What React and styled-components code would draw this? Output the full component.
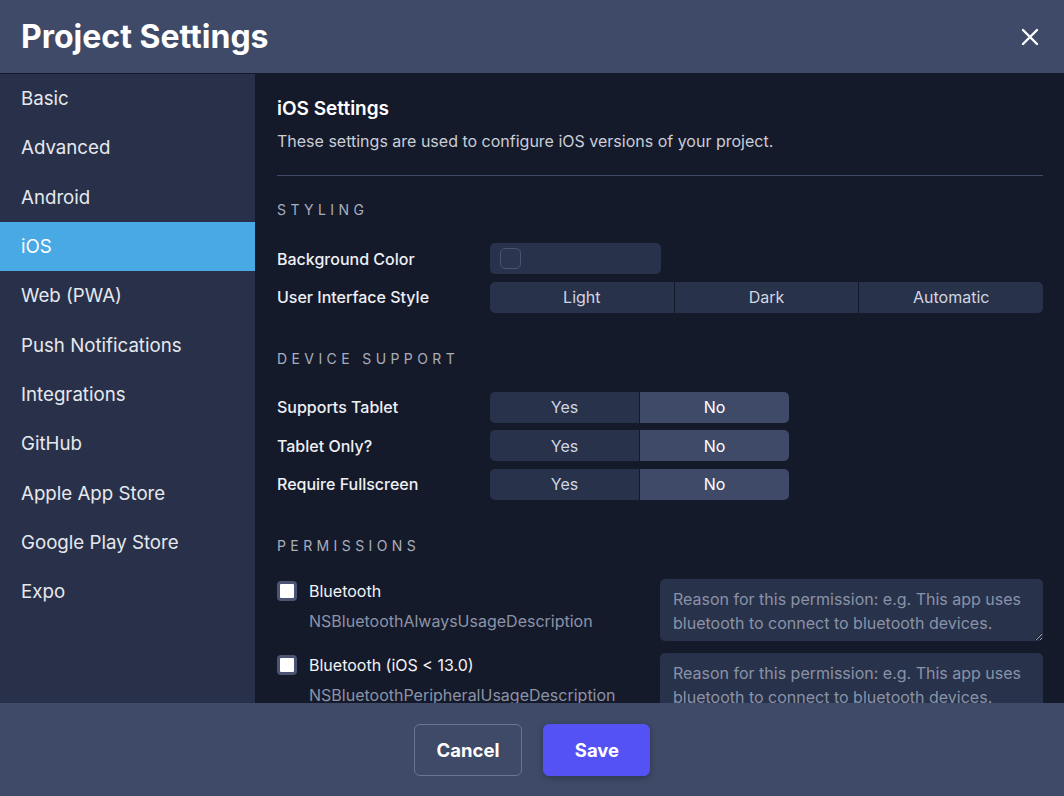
import React, { useState } from 'react';
import styled, { createGlobalStyle } from 'styled-components';

const GlobalStyle = createGlobalStyle`
  html, body {
    margin: 0;
    padding: 0;
    height: 100%;
    background: #151a2b;
  }
  #root {
    height: 100%;
  }
  * {
    box-sizing: border-box;
  }
`;

const Modal = styled.div`
  height: 100vh;
  display: flex;
  flex-direction: column;
  font-family: Inter, "Noto Sans", sans-serif;
  color: #e8eaf0;
  overflow: hidden;
`;

const Header = styled.header`
  height: 74px;
  flex: none;
  display: flex;
  align-items: center;
  justify-content: space-between;
  padding: 0 22px 0 21px;
  background: #3f4a68;
  border-bottom: 1px solid #141a2a;
`;

const Title = styled.h1`
  margin: 0;
  font-size: 32px;
  font-weight: 700;
  color: #ffffff;
`;

const CloseButton = styled.button`
  border: none;
  background: none;
  padding: 0;
  width: 24px;
  height: 24px;
  display: flex;
  align-items: center;
  justify-content: center;
  cursor: pointer;
`;

const Body = styled.div`
  flex: 1;
  display: flex;
  min-height: 0;
`;

const Sidebar = styled.nav`
  width: 256px;
  flex: none;
  background: #283149;
  border-right: 1px solid #141a2a;
`;

const NavItem = styled.div`
  height: 49.3px;
  display: flex;
  align-items: center;
  padding-left: 21px;
  font-size: 18.7px;
  color: ${({ $active }) => ($active ? '#ffffff' : '#e6e8ee')};
  background: ${({ $active }) => ($active ? '#48a9e4' : 'transparent')};
  cursor: pointer;
`;

const Content = styled.main`
  flex: 1;
  overflow: hidden;
  padding: 24px 21px 0 21px;
`;

const PageTitle = styled.h2`
  margin: 0;
  font-size: 19px;
  line-height: 22px;
  font-weight: 600;
  color: #ffffff;
`;

const Description = styled.p`
  margin: 10px 0 0;
  font-size: 16px;
  line-height: 22px;
  color: #c9cdd8;
`;

const Divider = styled.hr`
  margin: 23px 0 0;
  border: none;
  border-top: 1px solid #3f4a68;
`;

const Section = styled.section`
  margin-top: ${({ $first }) => ($first ? '25px' : '37px')};
`;

const SectionHeading = styled.h3`
  margin: 0 0 24px;
  font-size: 14px;
  line-height: 18px;
  font-weight: 400;
  letter-spacing: 4.4px;
  text-transform: uppercase;
  color: #a9aebb;
`;

const Rows = styled.div`
  display: flex;
  flex-direction: column;
  gap: 7.5px;
`;

const Row = styled.div`
  display: grid;
  grid-template-columns: 213px 1fr;
  align-items: center;
`;

const Label = styled.label`
  font-size: 16px;
  font-weight: 500;
  color: #eef0f4;
`;

const ColorField = styled.div`
  width: 171px;
  height: 31px;
  border-radius: 5px;
  background: #28324a;
  display: flex;
  align-items: center;
  padding-left: 10px;
`;

const Swatch = styled.span`
  width: 21px;
  height: 21px;
  border-radius: 5px;
  border: 1px solid #4a5470;
  background: #2b3550;
`;

const Segmented = styled.div`
  display: flex;
  width: ${({ $width }) => $width};
  height: 31px;
  border-radius: 5px;
  overflow: hidden;
  background: #151a2b;
  gap: 1px;
`;

const Segment = styled.button`
  flex: 1;
  border: none;
  margin: 0;
  font-family: inherit;
  font-size: 16px;
  color: ${({ $selected }) => ($selected ? '#ffffff' : '#d2d6e0')};
  background: ${({ $selected }) => ($selected ? '#3f4a68' : '#28324a')};
  cursor: pointer;
`;

const PermissionList = styled.div`
  display: flex;
  flex-direction: column;
  gap: 12px;
`;

const PermissionRow = styled.div`
  display: grid;
  grid-template-columns: 1fr 383px;
  align-items: start;
`;

const PermissionInfo = styled.div`
  display: grid;
  grid-template-columns: 32px 1fr;
  row-gap: 8px;
  padding-top: 1px;
`;

const Check = styled.span`
  width: 20px;
  height: 20px;
  margin-top: 1px;
  border-radius: 4px;
  background: #ffffff;
  border: 3px solid #4b5573;
`;

const PermName = styled.span`
  font-size: 16px;
  line-height: 22px;
  color: #f2f3f6;
`;

const PermKey = styled.span`
  grid-column: 2;
  font-size: 16px;
  line-height: 22px;
  color: #8c93a6;
`;

const Reason = styled.textarea`
  display: block;
  width: 100%;
  height: 62px;
  border: none;
  border-radius: 5px;
  background: #28324a;
  padding: 8px 13px;
  font-family: inherit;
  font-size: 16px;
  line-height: 24px;
  color: #e8eaf0;
  resize: vertical;
  outline: none;
  &::placeholder {
    color: #8a92a8;
  }
`;

const Footer = styled.footer`
  height: 93px;
  flex: none;
  background: #3f4a68;
  display: flex;
  align-items: center;
  justify-content: center;
  gap: 21px;
`;

const Button = styled.button`
  height: 52px;
  padding: 0 22px;
  border-radius: 6px;
  font-family: inherit;
  font-size: 18.5px;
  font-weight: 700;
  color: #ffffff;
  cursor: pointer;
  border: 1px solid ${({ $primary }) => ($primary ? '#5451f5' : '#6b7592')};
  background: ${({ $primary }) => ($primary ? '#5451f5' : 'transparent')};
  box-shadow: ${({ $primary }) => ($primary ? '0 2px 6px rgba(0,0,0,0.25)' : 'none')};
  min-width: ${({ $primary }) => ($primary ? '107px' : '108px')};
`;

const navItems = [
  'Basic',
  'Advanced',
  'Android',
  'iOS',
  'Web (PWA)',
  'Push Notifications',
  'Integrations',
  'GitHub',
  'Apple App Store',
  'Google Play Store',
  'Expo',
];

const deviceRows = ['Supports Tablet', 'Tablet Only?', 'Require Fullscreen'];

const permissions = [
  { name: 'Bluetooth', key: 'NSBluetoothAlwaysUsageDescription' },
  { name: 'Bluetooth (iOS < 13.0)', key: 'NSBluetoothPeripheralUsageDescription' },
];

const reasonHint =
  'Reason for this permission: e.g. This app uses bluetooth to connect to bluetooth devices.';

function CloseIcon() {
  return (
    <svg width="18" height="18" viewBox="0 0 18 18">
      <path d="M2 2 L16 16 M16 2 L2 16" stroke="#ffffff" strokeWidth="2.4" strokeLinecap="round" />
    </svg>
  );
}

export default function App() {
  const [active, setActive] = useState('iOS');
  const [uiStyle, setUiStyle] = useState('');
  const [device, setDevice] = useState({
    'Supports Tablet': 'No',
    'Tablet Only?': 'No',
    'Require Fullscreen': 'No',
  });

  return (
    <>
      <GlobalStyle />
      <Modal>
        <Header>
          <Title>Project Settings</Title>
          <CloseButton aria-label="Close">
            <CloseIcon />
          </CloseButton>
        </Header>

        <Body>
          <Sidebar>
            {navItems.map((item) => (
              <NavItem key={item} $active={item === active} onClick={() => setActive(item)}>
                {item}
              </NavItem>
            ))}
          </Sidebar>

          <Content>
            <PageTitle>iOS Settings</PageTitle>
            <Description>These settings are used to configure iOS versions of your project.</Description>
            <Divider />

            <Section $first>
              <SectionHeading>Styling</SectionHeading>
              <Rows>
                <Row>
                  <Label>Background Color</Label>
                  <ColorField>
                    <Swatch />
                  </ColorField>
                </Row>
                <Row>
                  <Label>User Interface Style</Label>
                  <Segmented $width="553px">
                    {['Light', 'Dark', 'Automatic'].map((opt) => (
                      <Segment key={opt} $selected={uiStyle === opt} onClick={() => setUiStyle(opt)}>
                        {opt}
                      </Segment>
                    ))}
                  </Segmented>
                </Row>
              </Rows>
            </Section>

            <Section>
              <SectionHeading>Device Support</SectionHeading>
              <Rows>
                {deviceRows.map((label) => (
                  <Row key={label}>
                    <Label>{label}</Label>
                    <Segmented $width="299px">
                      {['Yes', 'No'].map((opt) => (
                        <Segment
                          key={opt}
                          $selected={device[label] === opt}
                          onClick={() => setDevice({ ...device, [label]: opt })}
                        >
                          {opt}
                        </Segment>
                      ))}
                    </Segmented>
                  </Row>
                ))}
              </Rows>
            </Section>

            <Section>
              <SectionHeading>Permissions</SectionHeading>
              <PermissionList>
                {permissions.map((p) => (
                  <PermissionRow key={p.key}>
                    <PermissionInfo>
                      <Check />
                      <PermName>{p.name}</PermName>
                      <PermKey>{p.key}</PermKey>
                    </PermissionInfo>
                    <Reason placeholder={reasonHint} />
                  </PermissionRow>
                ))}
              </PermissionList>
            </Section>
          </Content>
        </Body>

        <Footer>
          <Button>Cancel</Button>
          <Button $primary>Save</Button>
        </Footer>
      </Modal>
    </>
  );
}
